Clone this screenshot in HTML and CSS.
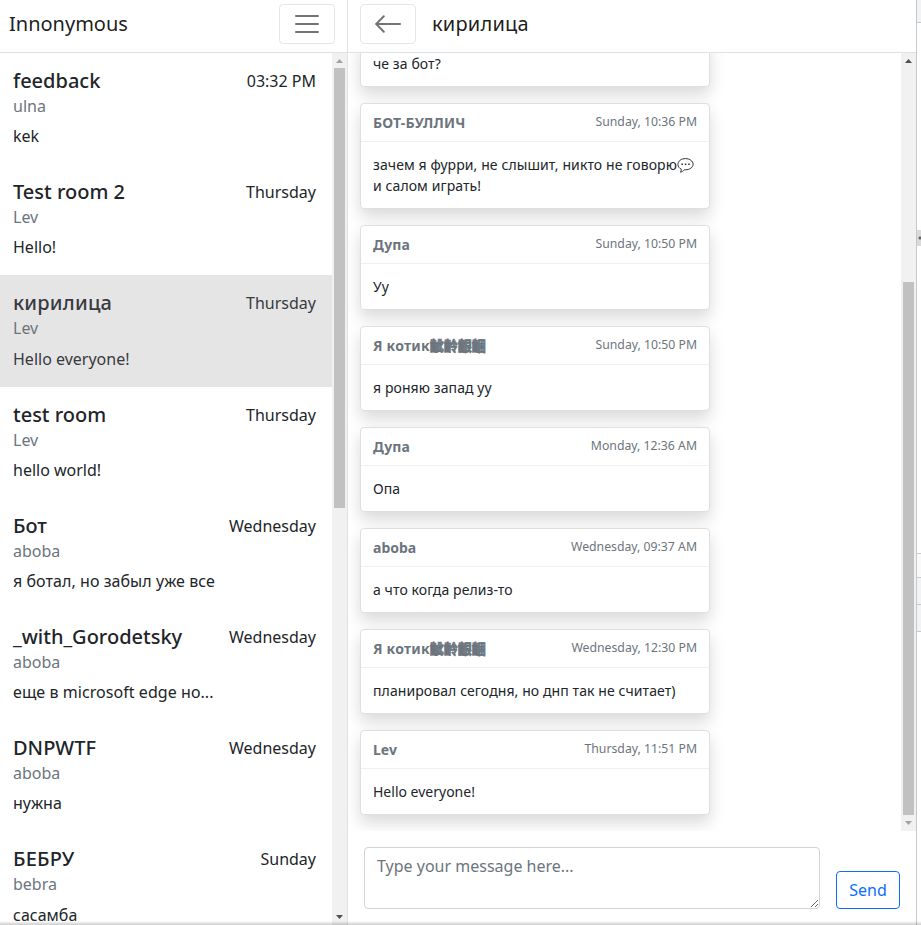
FILE: index.html
```html
<!DOCTYPE html>
<html lang="ru">
<head>
<meta charset="utf-8">
<title>Innonymous</title>
<link rel="stylesheet" href="styles.css">
</head>
<body>
<div class="app">
  <aside class="sidebar">
    <header class="bar">
      <span class="brand">Innonymous</span>
      <button class="toggler" aria-label="Menu"><svg viewBox="0 0 30 30"><path d="M4 7h22M4 15h22M4 23h22"/></svg></button>
    </header>
    <div class="scroller">
      <div class="rooms">
        <div class="room"><div class="top"><h5>feedback</h5><span>03:32 PM</span></div><div class="author">ulna</div><p>kek</p></div>
        <div class="room"><div class="top"><h5>Test room 2</h5><span>Thursday</span></div><div class="author">Lev</div><p>Hello!</p></div>
        <div class="room active"><div class="top"><h5 class="wide">кирилица</h5><span>Thursday</span></div><div class="author">Lev</div><p>Hello everyone!</p></div>
        <div class="room"><div class="top"><h5>test room</h5><span>Thursday</span></div><div class="author">Lev</div><p>hello world!</p></div>
        <div class="room"><div class="top"><h5>Бот</h5><span>Wednesday</span></div><div class="author">aboba</div><p class="spaced">я ботал, но забыл уже все</p></div>
        <div class="room"><div class="top"><h5>_with_Gorodetsky</h5><span>Wednesday</span></div><div class="author">aboba</div><p class="spaced">еще в microsoft edge но...</p></div>
        <div class="room"><div class="top"><h5>DNPWTF</h5><span>Wednesday</span></div><div class="author">aboba</div><p>нужна</p></div>
        <div class="room"><div class="top"><h5 class="wide">БЕБРУ</h5><span>Sunday</span></div><div class="author">bebra</div><p>сасамба</p></div>
      </div>
      <div class="track"><i class="up off"></i><b class="thumb rooms-thumb"></b><i class="down"></i></div>
    </div>
  </aside>
  <main class="chat">
    <header class="bar">
      <button class="toggler" aria-label="Back"><svg viewBox="0 0 30 30"><path d="M27 15H3.2M10.8 7.2L3.2 15l7.6 7.8"/></svg></button>
      <span class="room-name wide">кирилица</span>
    </header>
    <div class="scroller">
      <div class="messages">
        <article class="card"><p>че за бот?</p></article>
        <article class="card"><div class="head"><strong class="wide">БОТ-БУЛЛИЧ</strong><small>Sunday, 10:36 PM</small></div><p>зачем я фурри, не слышит, никто не говорю<svg class="bubble" viewBox="0 0 17 16"><path d="M4.300 12.200C2.200 11.300.9 9.600.9 7.500.9 4.100 4.300 1.600 8.500 1.600s7.600 2.500 7.600 5.600-3.400 5.600-7.600 5.600H7.200C6.200 14 5 15 3.500 15.200c.6-.9.9-1.900.8-3z"/><path class="dots" d="M4.400 7.200h1.500M7.800 7.200h1.500M11.200 7.200h1.500"/></svg> и салом играть!</p></article>
        <article class="card"><div class="head"><strong>Дупа</strong><small>Sunday, 10:50 PM</small></div><p>Уу</p></article>
        <article class="card"><div class="head"><strong><span class="wide">Я котик</span><span class="han">齜齡齦齫</span></strong><small>Sunday, 10:50 PM</small></div><p>я роняю запад уу</p></article>
        <article class="card"><div class="head"><strong>Дупа</strong><small>Monday, 12:36 AM</small></div><p>Опа</p></article>
        <article class="card"><div class="head"><strong>aboba</strong><small>Wednesday, 09:37 AM</small></div><p>а что когда релиз-то</p></article>
        <article class="card"><div class="head"><strong><span class="wide">Я котик</span><span class="han">齜齡齦齫</span></strong><small>Wednesday, 12:30 PM</small></div><p>планировал сегодня, но днп так не считает)</p></article>
        <article class="card"><div class="head"><strong>Lev</strong><small>Thursday, 11:51 PM</small></div><p class="latin">Hello everyone!</p></article>
      </div>
      <div class="track"><i class="up"></i><b class="thumb chat-thumb"></b><i class="down off"></i></div>
    </div>
    <form class="composer">
      <textarea placeholder="Type your message here..."></textarea>
      <button type="button" class="send">Send</button>
    </form>
  </main>
  <div class="edge"><i class="e-top"></i><i class="e-gap"></i><i class="e-grip"></i><i class="e-space"></i><i class="e-row light"></i><i class="e-row"></i><i class="e-row"></i><i class="e-row last"></i></div>
  <div class="window-shadow"></div>
</div>
</body>
</html>
```
FILE: styles.css
```css
* { box-sizing: border-box; }
body {
  margin: 0;
  font: 16px/1.5 "Noto Sans", "Noto Sans CJK SC", sans-serif;
  color: #212529;
  background: #fff;
}
h5, p { margin: 0; }
.app { position: relative; display: flex; width: 921px; height: 925px; overflow: hidden; }
.sidebar { width: 348px; display: flex; flex-direction: column; border-right: 1px solid #dee2e6; }
.chat { width: 569px; display: flex; flex-direction: column; border-right: 1px solid #c5c9ce; }
.bar { flex: none; height: 53px; display: flex; align-items: flex-start; padding: 4px 12px 0; border-bottom: 1px solid #dee2e6; }
.sidebar .bar { justify-content: space-between; padding-left: 9px; }
.brand, .room-name { font-size: 20px; line-height: 40px; color: rgba(0, 0, 0, .9); }
.room-name { margin-left: 16px; }
.toggler { width: 56px; height: 40px; padding: 4px 12px; border: 1px solid rgba(0, 0, 0, .1); border-radius: 4px; background: none; }
.toggler svg { display: block; width: 30px; height: 30px; fill: none; stroke: rgba(0, 0, 0, .55); stroke-width: 2; stroke-linecap: round; }
.scroller { flex: 1; min-height: 0; display: flex; }
.wide { letter-spacing: .22px; }
.spaced { letter-spacing: .06px; }

.rooms { flex: 1; min-width: 0; overflow: hidden; }
.room { height: 111.2px; padding: 16px 16px 0 13px; }
.room.active { background: #e5e5e5; color: #373a3e; }
.top { display: flex; justify-content: space-between; height: 24px; line-height: 24px; }
.top h5 { font-size: 20px; font-weight: 500; line-height: 24px; }
.author { height: 24px; margin-top: 1px; color: #6c757d; }
.room p { margin-top: 6.2px; height: 24px; white-space: nowrap; }

.track { flex: none; width: 15px; padding: 0 2px; display: flex; flex-direction: column; align-items: center; background: #f1f1f1; }
.up, .down { flex: none; width: 7px; height: 4px; background: #505050; }
.up { margin: 6px 0 5px; clip-path: polygon(50% 0, 100% 100%, 0 100%); }
.down { margin: auto 0 6px; clip-path: polygon(0 0, 100% 0, 50% 100%); }
.off { background: #a3a3a3; }
.thumb { width: 11px; background: #c1c1c1; }
.rooms-thumb { height: 440px; }
.chat-thumb { height: 533px; margin-top: 214px; }

.messages { flex: 1; display: flex; flex-direction: column; justify-content: flex-end; gap: 16px; padding: 0 12px 16px; overflow: hidden; }
.card { flex: none; width: 350px; border: 1px solid #dfdfdf; border-radius: 4px; background: #fff; box-shadow: 0 8px 16px rgba(0, 0, 0, .15); font-size: 14px; line-height: 21px; }
.head { display: flex; justify-content: space-between; height: 38px; padding: 8px 12px; border-bottom: 1px solid #f0f0f0; color: #6c757d; }
.head strong { font-weight: 700; height: 21px; }
.head small { font-size: 12.25px; line-height: 19px; }
.han { -webkit-text-stroke: .7px currentColor; }
.card p { padding: 12px; letter-spacing: .09px; }
.card .latin { letter-spacing: 0; }
.bubble { width: 17px; height: 16px; vertical-align: -3px; fill: #fff; stroke: #303030; stroke-width: 1; }
.bubble .dots { stroke-width: 1.5; }

.composer { flex: none; height: 94px; display: flex; align-items: flex-end; gap: 16px; padding: 16px; }
.composer textarea { flex: 1; height: 62px; margin: 0; padding: 6px 12px; border: 1px solid #ced4da; border-radius: 4px; font: inherit; resize: vertical; overflow: hidden; }
.composer textarea::placeholder { color: #6c757d; opacity: 1; }
.send { width: 64px; height: 38px; padding: 0; border: 1px solid #0d6efd; border-radius: 4px; background: #fff; color: #0d6efd; font: inherit; }

.edge { width: 4px; display: flex; flex-direction: column; }
.edge i { flex: none; }
.e-top { height: 23px; background: #f1f3f4; border-bottom: 1px solid #c5c9ce; }
.e-gap { height: 207px; }
.e-grip { height: 16px; background: radial-gradient(circle at 3px 8px, #666 1px, #dadada 2px); }
.e-space { height: 307px; }
.e-row { height: 27px; background: #f1f3f4; border-top: 1px solid #c5c9ce; }
.e-row.light { height: 24px; background: #fafafa; }
.e-row.last { height: 1px; }
.window-shadow { position: absolute; left: 0; right: 0; bottom: 0; height: 4px; background: linear-gradient(rgba(0, 0, 0, 0), rgba(0, 0, 0, .2)); }
```
